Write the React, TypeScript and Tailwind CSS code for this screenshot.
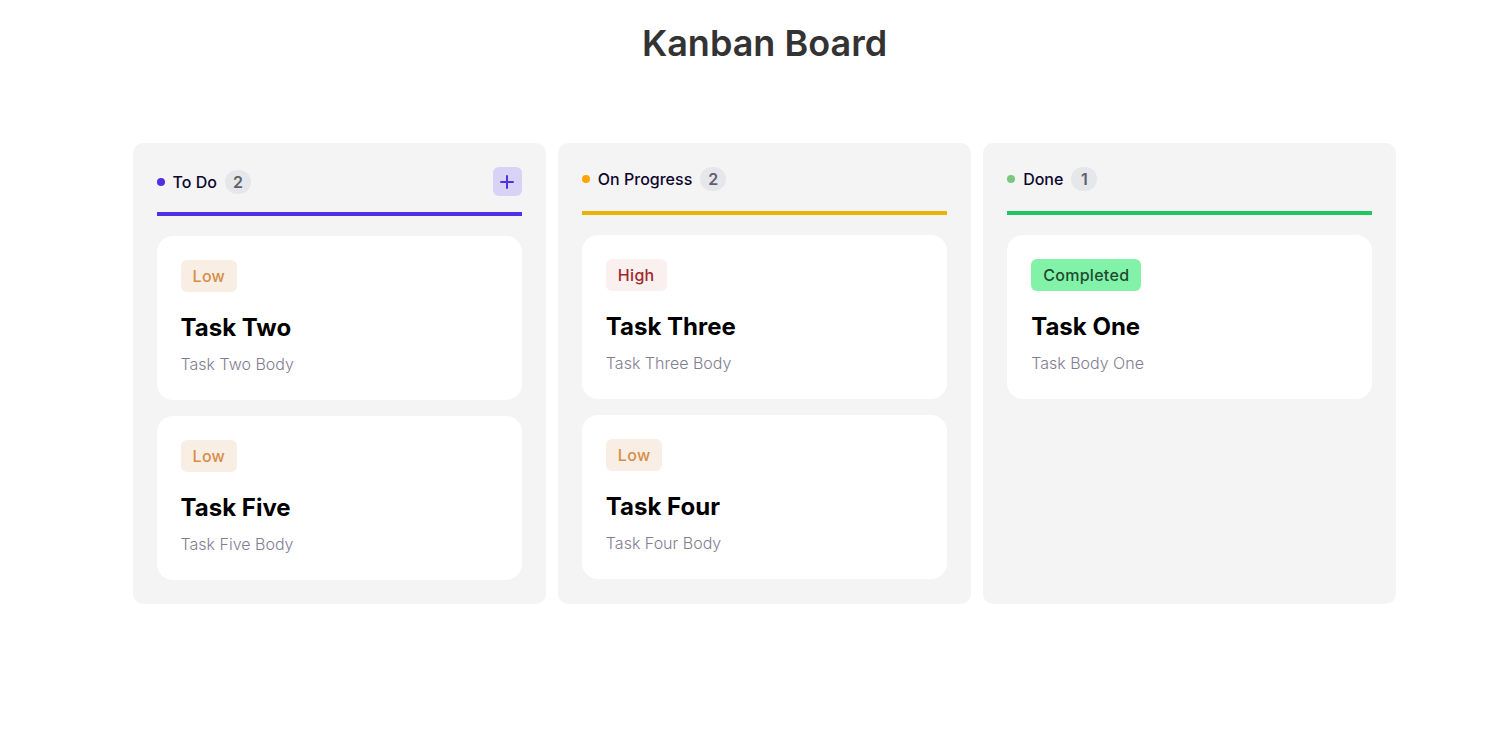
import React from "react";

type Task = { title: string; body: string; tag: "Low" | "High" | "Completed" };
type Column = {
  name: string;
  dot: string;
  line: string;
  tasks: Task[];
  add?: boolean;
};

const tagStyles: Record<Task["tag"], string> = {
  Low: "bg-[#f9eee3] text-[#d58d49]",
  High: "bg-[#fbf0f0] text-[#a1282b]",
  Completed: "bg-[#83f2a9] text-[#1e4a2f]",
};

const columns: Column[] = [
  {
    name: "To Do",
    dot: "bg-[#5030e5]",
    line: "border-[#5030e5]",
    add: true,
    tasks: [
      { tag: "Low", title: "Task Two", body: "Task Two Body" },
      { tag: "Low", title: "Task Five", body: "Task Five Body" },
    ],
  },
  {
    name: "On Progress",
    dot: "bg-[#ffa500]",
    line: "border-[#eab308]",
    tasks: [
      { tag: "High", title: "Task Three", body: "Task Three Body" },
      { tag: "Low", title: "Task Four", body: "Task Four Body" },
    ],
  },
  {
    name: "Done",
    dot: "bg-[#7ac77f]",
    line: "border-[#22c55e]",
    tasks: [{ tag: "Completed", title: "Task One", body: "Task Body One" }],
  },
];

function Card({ task }: { task: Task }) {
  return (
    <div className="bg-white rounded-2xl p-6 flex flex-col items-start">
      <span
        className={`h-8 px-3 rounded-md flex items-center text-base font-medium tracking-[0.3px] ${tagStyles[task.tag]}`}
      >
        {task.tag}
      </span>
      <h3 className="mt-5 text-2xl leading-8 font-bold text-black">{task.title}</h3>
      <p className="mt-2 text-base leading-6 font-light text-[#837d91]">{task.body}</p>
    </div>
  );
}

function ColumnView({ col }: { col: Column }) {
  return (
    <div className="w-[413.3px] bg-[#f4f4f4] rounded-[10px] p-6 flex flex-col">
      <div
        className={`flex items-center justify-between border-b-4 ${col.line} ${
          col.add ? "pb-4" : "pb-5"
        }`}
      >
        <div className="flex items-center h-6">
          <span className={`w-2 h-2 rounded-full ${col.dot}`} />
          <span className="ml-2 text-base font-medium text-[#0d062d]">{col.name}</span>
          <span className="ml-2 h-6 w-[26px] rounded-full bg-[#e6e7eb] flex items-center justify-center text-base font-semibold text-[#625f6d]">
            {col.tasks.length}
          </span>
        </div>
        {col.add && (
          <button className="w-[29px] h-[29px] rounded-md bg-[#d8d2f6] flex items-center justify-center">
            <svg width="14" height="14" viewBox="0 0 14 14" fill="none">
              <path d="M7 1v12M1 7h12" stroke="#5030e5" strokeWidth="2" strokeLinecap="round" />
            </svg>
          </button>
        )}
      </div>
      <div className="mt-5 flex flex-col gap-4">
        {col.tasks.map((t) => (
          <Card key={t.title} task={t} />
        ))}
      </div>
    </div>
  );
}

export default function App() {
  return (
    <div
      className="min-h-screen bg-white pl-8 pt-[23px]"
      style={{ fontFamily: "Inter, 'Noto Sans', sans-serif" }}
    >
      <h1 className="text-4xl leading-10 font-semibold text-[#333333] text-center">Kanban Board</h1>
      <div className="mt-20 flex justify-center gap-3 items-stretch">
        {columns.map((c) => (
          <ColumnView key={c.name} col={c} />
        ))}
      </div>
    </div>
  );
}
